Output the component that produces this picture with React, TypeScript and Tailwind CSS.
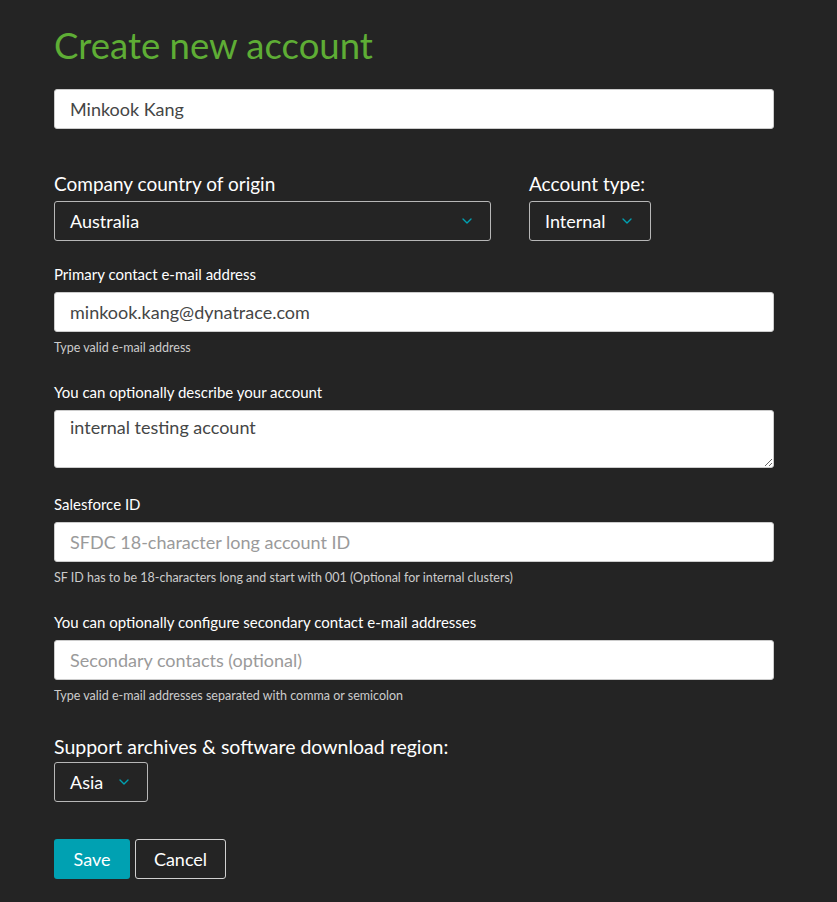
import { ChevronDown } from 'lucide-react'

const inputCls =
  'w-full h-10 px-[15px] bg-white border border-[#cccccc] rounded-[3px] text-[18px] text-[#454646] placeholder:text-[#9a9a9a] outline-none'

function Select({ value, className }: { value: string; className: string }) {
  return (
    <div className={`h-10 flex items-center justify-between pl-[15px] pr-[15px] border border-[#b7b7b7] rounded-[3px] text-[18px] text-white ${className}`}>
      <span>{value}</span>
      <ChevronDown className="h-4 w-4 text-[#00a1b2]" strokeWidth={2} />
    </div>
  )
}

function Hint({ children }: { children: React.ReactNode }) {
  return <p className="mt-[9px] text-[12.5px] leading-[14px] text-[#cccccc]">{children}</p>
}

function Label({ children }: { children: React.ReactNode }) {
  return <label className="block mb-[9px] text-[15px] leading-[17px] text-white">{children}</label>
}

export default function App() {
  return (
    <div className="min-h-[902px] bg-[#242424] px-[54px] pt-[23px] font-['Lato',sans-serif]" style={{ width: 837 }}>
      <div className="w-[720px]">
        <h1 className="text-[36.5px] leading-[44px] font-normal text-[#5ead35]">Create new account</h1>

        <input className={`${inputCls} mt-[22px]`} defaultValue="Minkook Kang" />

        <div className="mt-[44px] flex gap-[38px]">
          <div className="w-[437px]">
            <div className="text-[19px] leading-[22px] text-white mb-[6px]">Company country of origin</div>
            <Select value="Australia" className="w-full" />
          </div>
          <div className="w-[122px]">
            <div className="text-[19px] leading-[22px] text-white mb-[6px]">Account type:</div>
            <Select value="Internal" className="w-full" />
          </div>
        </div>

        <div className="mt-[25px]">
          <Label>Primary contact e-mail address</Label>
          <input className={inputCls} defaultValue="minkook.kang@dynatrace.com" />
          <Hint>Type valid e-mail address</Hint>
        </div>

        <div className="mt-[29px]">
          <Label>You can optionally describe your account</Label>
          <textarea
            className="block w-full h-[58px] px-[15px] py-[4px] bg-white border border-[#cccccc] rounded-[3px] text-[18px] leading-[24px] text-[#454646] outline-none"
            defaultValue="internal testing account"
          />
        </div>

        <div className="mt-[28px]">
          <Label>Salesforce ID</Label>
          <input className={inputCls} placeholder="SFDC 18-character long account ID" />
          <Hint>SF ID has to be 18-characters long and start with 001 (Optional for internal clusters)</Hint>
        </div>

        <div className="mt-[29px]">
          <Label>You can optionally configure secondary contact e-mail addresses</Label>
          <input className={inputCls} placeholder="Secondary contacts (optional)" />
          <Hint>Type valid e-mail addresses separated with comma or semicolon</Hint>
        </div>

        <div className="mt-[33px]">
          <div className="text-[19.5px] leading-[22px] text-white mb-[4px]">Support archives &amp; software download region:</div>
          <Select value="Asia" className="w-[94px]" />
        </div>

        <div className="mt-[37px] flex gap-[5px]">
          <button className="h-10 w-[76px] rounded-[3px] bg-[#00a1b2] text-[18px] text-white">Save</button>
          <button className="h-10 w-[91px] rounded-[3px] border border-[#d0d0d0] text-[18px] text-white">Cancel</button>
        </div>
      </div>
    </div>
  )
}
